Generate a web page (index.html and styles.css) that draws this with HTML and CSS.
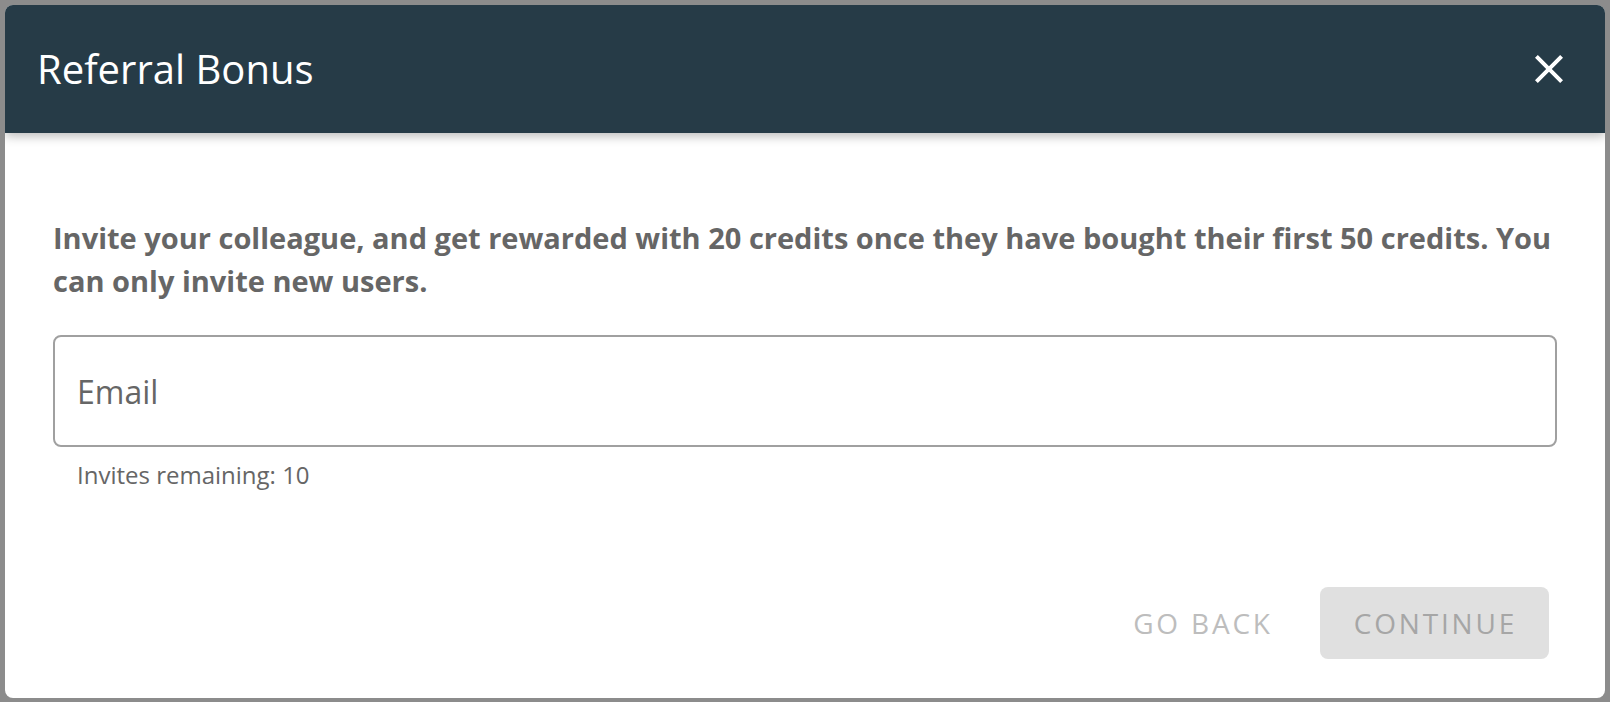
FILE: index.html
```html
<!DOCTYPE html>
<html lang="en">
<head>
	<meta charset="UTF-8">
	<meta name="viewport" content="width=device-width, initial-scale=1.0">
	<title>Referral Bonus</title>
	<link rel="stylesheet" href="styles.css">
</head>
<body>
<div class="backdrop">
	<div class="dialog">
		<div class="dialogHead">
			<div class="dialogTitle">Referral Bonus</div>
			<button class="closeBtn" type="button" aria-label="Close">
				<svg viewBox="0 0 24 24" width="48" height="48"><path d="M19 6.41 17.59 5 12 10.59 6.41 5 5 6.41 10.59 12 5 17.59 6.41 19 12 13.41 17.59 19 19 17.59 13.41 12z" fill="#fff"/></svg>
			</button>
		</div>
		<div class="dialogBody">
			<p class="intro">Invite your colleague, and get rewarded with 20 credits once they have bought their first 50 credits. You can only invite new users.</p>
			<input class="emailInput" type="email" placeholder="Email">
			<div class="helper">Invites remaining: 10</div>
		</div>
		<div class="dialogActions">
			<button class="textBtn" type="button" disabled>Go back</button>
			<button class="fillBtn" type="button" disabled>Continue</button>
		</div>
	</div>
</div>
</body>
</html>
```

FILE: styles.css
```css
html, body {
	margin: 0;
	padding: 0;
	background: #8c8c8c;
	font-family: "Open Sans", "Liberation Sans", sans-serif;
	height: 100%;
	overflow: hidden;
}

.backdrop {
	padding: 5px;
}

.dialog {
	background: #fff;
	border-radius: 8px;
	overflow: hidden;
	height: 693px;
	display: flex;
	flex-direction: column;
}

.dialogHead {
	position: relative; /* keep shadow over body */
	z-index: 1;
	height: 128px;
	flex: none;
	background: #263b47;
	display: flex;
	align-items: center;
	justify-content: space-between;
	padding: 0 32px;
	box-shadow: 0 3px 10px rgba(0, 0, 0, 0.28);
}

.dialogTitle {
	color: #fff;
	font-size: 40px;
	font-weight: 400;
	line-height: 48px;
}

.closeBtn {
	background: none;
	border: 0;
	padding: 0;
	width: 48px;
	height: 48px;
	cursor: pointer;
	display: block;
}
.closeBtn svg {
	display: block;
}

.dialogBody {
	padding: 83px 48px 0;
}

.intro {
	margin: 0;
	font-size: 29px;
	line-height: 43px;
	font-weight: 700;
	color: #666;
}

.emailInput {
	display: block;
	box-sizing: border-box;
	width: 100%;
	height: 112px;
	margin-top: 33px;
	padding: 0 22px;
	border: 2px solid #a0a0a0;
	border-radius: 8px;
	font-family: inherit;
	font-size: 32px;
	color: #333;
	outline: none;
}
.emailInput::placeholder {
	color: #666;
	opacity: 1;
}

.helper {
	margin: 8px 0 0 24px;
	font-size: 24px;
	line-height: 40px;
	color: #666;
}

.dialogActions {
	margin-top: auto;
	display: flex;
	justify-content: flex-end;
	align-items: center;
	gap: 15px;
	padding: 0 56px 39px;
}

.textBtn, .fillBtn {
	font-family: inherit;
	font-size: 28px;
	font-weight: 400;
	letter-spacing: 2.8px;
	text-transform: uppercase;
	height: 72px;
	border: 0;
	border-radius: 8px;
	padding: 0 32px 0 34px;
	cursor: default;
}

.textBtn {
	background: none;
	color: #bdbdbd;
}

.fillBtn {
	background: #e0e0e0;
	color: #a6a6a6;
}
```
